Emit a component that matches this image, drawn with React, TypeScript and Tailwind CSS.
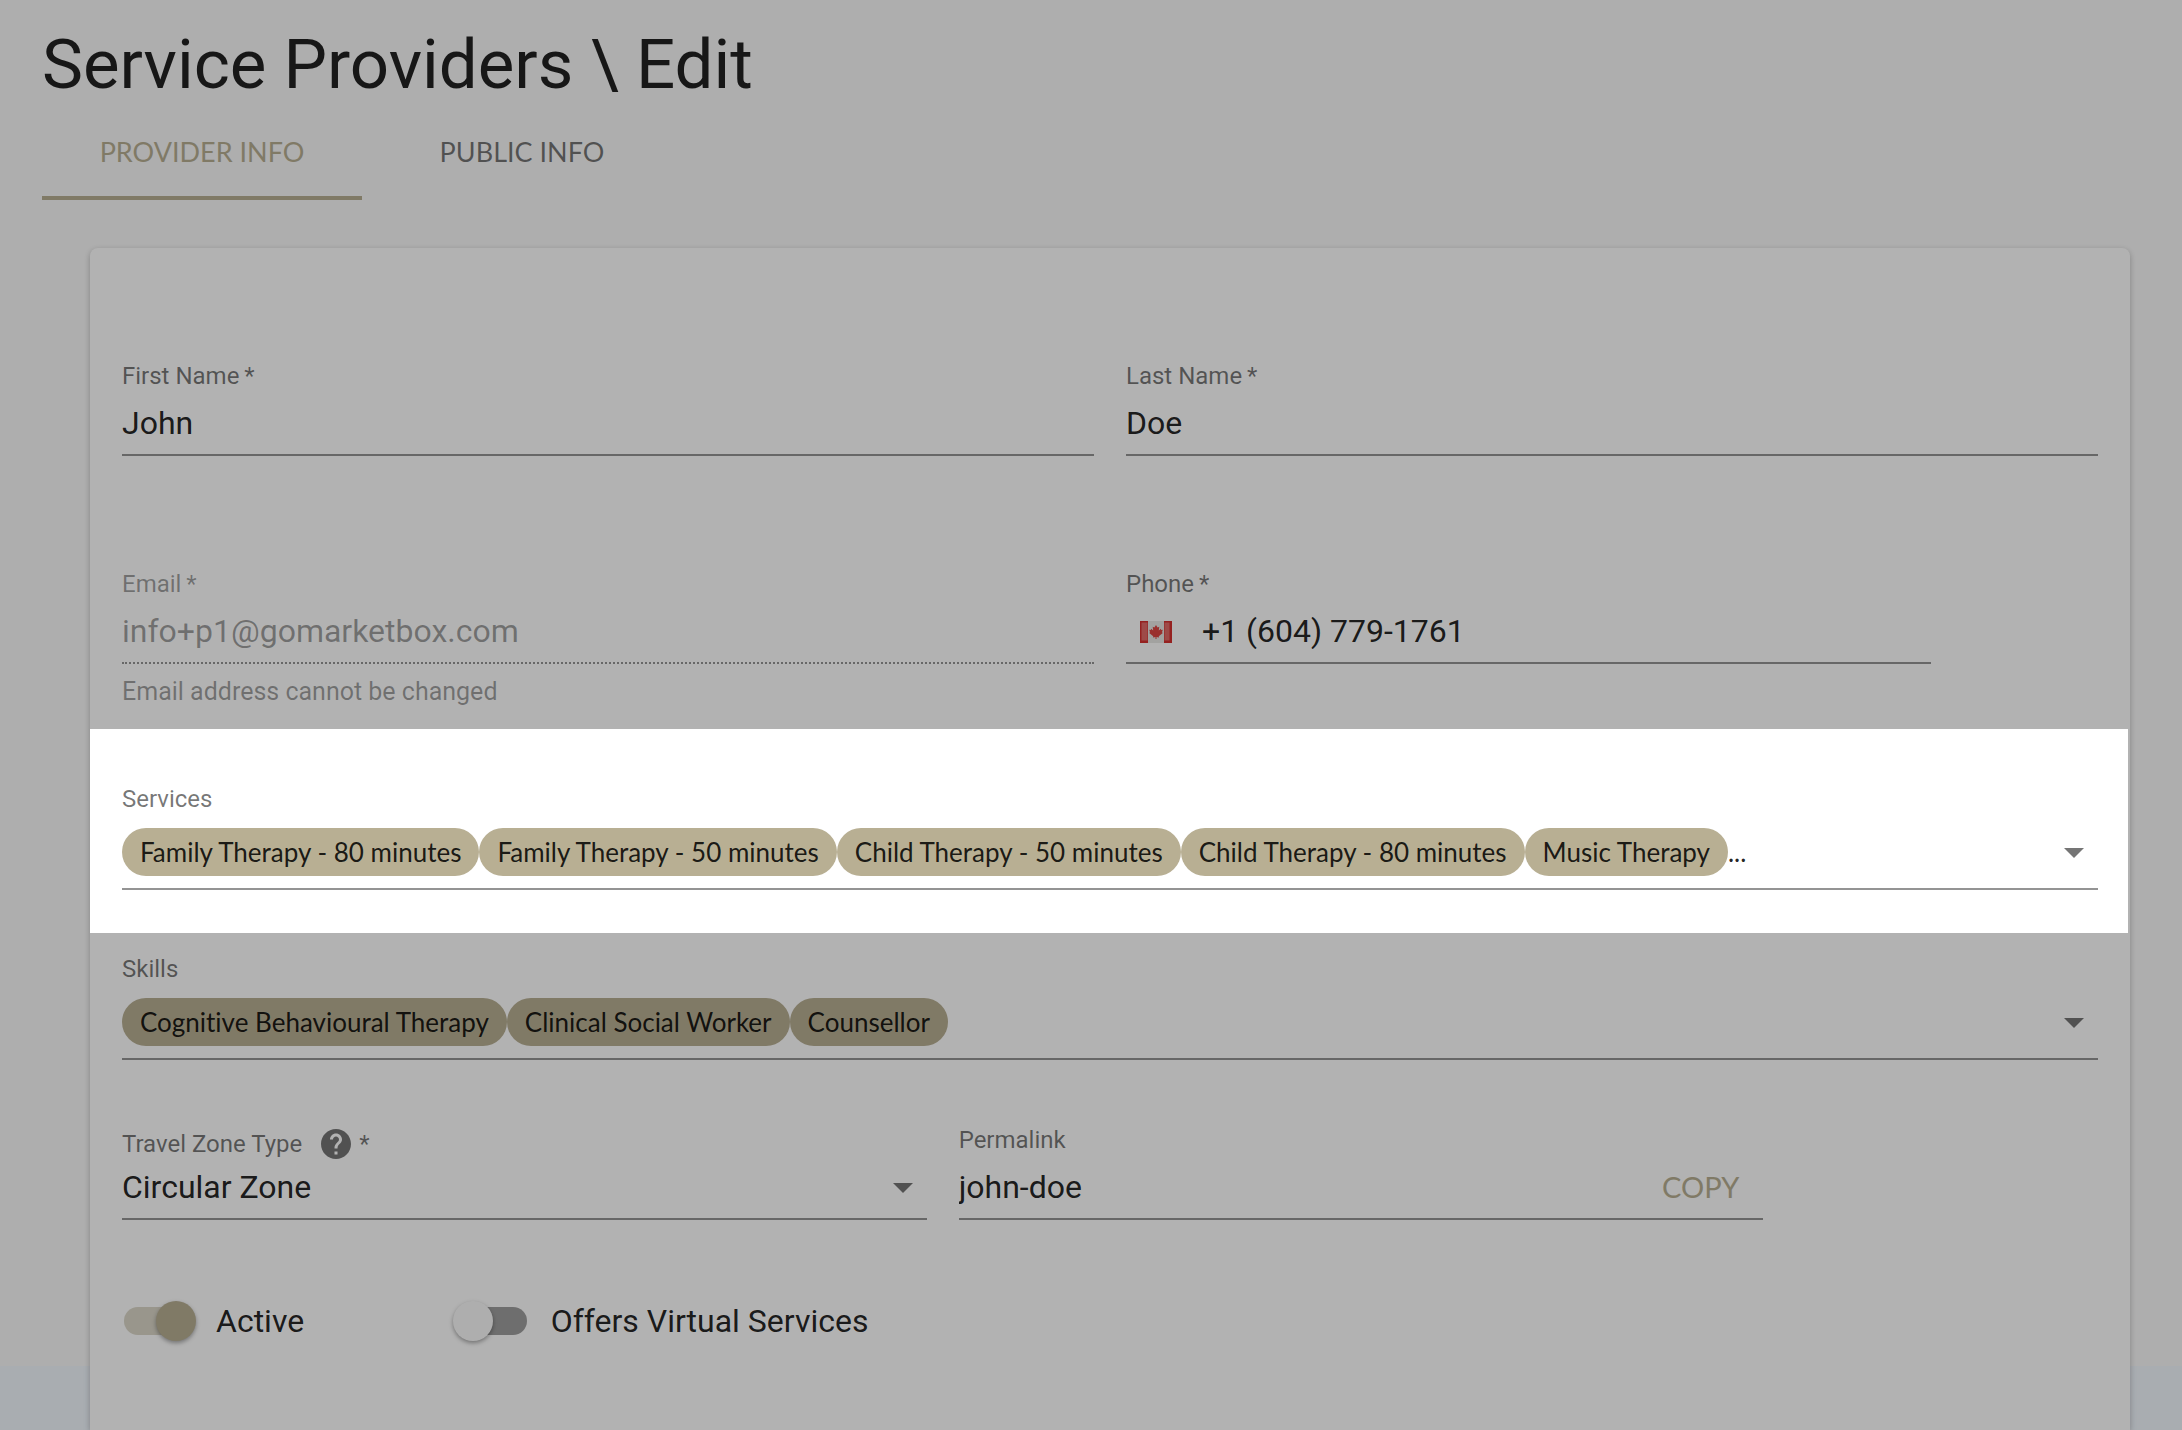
import React, { useState } from 'react';
import { MdArrowDropDown, MdHelp } from 'react-icons/md';

const SERVICES = [
  'Family Therapy - 80 minutes',
  'Family Therapy - 50 minutes',
  'Child Therapy - 50 minutes',
  'Child Therapy - 80 minutes',
  'Music Therapy',
];

const SKILLS = ['Cognitive Behavioural Therapy', 'Clinical Social Worker', 'Counsellor'];

const inputClass =
  'block w-full h-[52px] pb-3 border-b-2 border-black/42 bg-transparent text-[32px] text-black/87 outline-none disabled:border-dotted disabled:text-black/38';

function FieldLabel({ htmlFor, required, disabled, children }: any) {
  return (
    <label
      htmlFor={htmlFor}
      className={`flex h-11 items-center pb-3 text-2xl leading-6 ${disabled ? 'text-black/38' : 'text-black/54'}`}
    >
      {children}
      {required && <span className="whitespace-pre">{'\u2009*'}</span>}
    </label>
  );
}

function ChipSelect({ id, label, items, more }: { id: string; label: string; items: string[]; more?: boolean }) {
  return (
    <div>
      <span id={id} className="block pt-px pb-[17px] text-2xl leading-6 text-black/54">
        {label}
      </span>
      <button
        type="button"
        aria-haspopup="listbox"
        aria-labelledby={id}
        className="flex w-full items-center border-b-2 border-black/42 pb-3 text-left"
      >
        <span className="flex min-w-0 flex-1 items-center overflow-hidden font-[Lato,sans-serif] text-[26px] text-black/87 [font-variant-ligatures:none]">
          {items.map(item => (
            <span key={item} className="flex h-12 items-center whitespace-nowrap rounded-full bg-[#b8af93] px-[18px]">
              {item}
            </span>
          ))}
          {more && <span>...</span>}
        </span>
        <MdArrowDropDown className="size-12 shrink-0 text-black/54" />
      </button>
    </div>
  );
}

function Toggle({ label, checked, onChange }: { label: string; checked: boolean; onChange: (v: boolean) => void }) {
  return (
    <label className="ml-0.5 flex h-[74px] items-center gap-6 whitespace-nowrap text-[32px] text-black/87">
      <input
        type="checkbox"
        checked={checked}
        onChange={e => onChange(e.target.checked)}
        className="flex h-7 w-[68px] shrink-0 appearance-none items-center rounded-full bg-black/38 before:size-10 before:shrink-0 before:-translate-x-1.5 before:rounded-full before:bg-[#fafafa] before:shadow-[0_2px_4px_rgba(0,0,0,0.35)] before:content-[''] checked:bg-[#b8af93]/50 checked:before:translate-x-8 checked:before:bg-[#b8af93]"
      />
      {label}
    </label>
  );
}

function CanadaFlag() {
  return (
    <svg viewBox="0 0 32 24" className="h-6 w-8 shrink-0" aria-hidden="true">
      <g transform="translate(0 2)">
        <rect width="32" height="22" fill="#e8e8e6" />
        <rect width="8" height="22" fill="#d6302f" />
        <rect x="24" width="8" height="22" fill="#d6302f" />
        <path d="M1.5 1.5h6v18h-6zM24.500 1.500h5v18h-5z" fill="#e26a68" />
        <path
          d="M16 4l1.600 2.600 1.700-.8-.5 3.700 2-1.800.5 1.300 1.500-.2-.8 2.500.8.7-4 3.200.2 1.300-2.500-.4V18h-1v-1.900l-2.500.4.2-1.300-4-3.200.8-.7-.8-2.500 1.500.2.500-1.300 2 1.800-.5-3.700 1.700.8z"
          fill="#dd4542"
        />
      </g>
    </svg>
  );
}

export default function App() {
  const [tab, setTab] = useState('provider');
  const [active, setActive] = useState(true);
  const [virtual, setVirtual] = useState(false);

  const tabClass = (name: string) =>
    `h-24 w-80 border-b-4 pt-1 font-[Lato,sans-serif] text-[27px] uppercase ${
      tab === name ? 'border-[#b8af93] text-[#b8af93]' : 'border-transparent text-black/54'
    }`;

  return (
    <div className="flex min-h-screen flex-col overflow-hidden bg-[linear-gradient(to_top,#f2f8fe_64px,#fafafa_64px)] px-[42px] pt-[25px] font-[Roboto,sans-serif]">
      <h1 className="text-[69px] leading-[79px] text-black/87">Service Providers \ Edit</h1>

      <div role="tablist" className="flex">
        <button role="tab" aria-selected={tab === 'provider'} onClick={() => setTab('provider')} className={tabClass('provider')}>
          Provider Info
        </button>
        <button role="tab" aria-selected={tab === 'public'} onClick={() => setTab('public')} className={tabClass('public')}>
          Public Info
        </button>
      </div>

      <form className="mt-12 mr-2.5 ml-12 flex-1 rounded-t-lg bg-white pt-28 shadow-[0_2px_6px_rgba(0,0,0,0.25)]">
        <div className="grid grid-cols-12 gap-x-8 gap-y-28 px-8">
          <div className="col-span-6">
            <FieldLabel htmlFor="firstName" required>First Name</FieldLabel>
            <input id="firstName" defaultValue="John" className={inputClass} />
          </div>
          <div className="col-span-6">
            <FieldLabel htmlFor="lastName" required>Last Name</FieldLabel>
            <input id="lastName" defaultValue="Doe" className={inputClass} />
          </div>
          <div className="col-span-6">
            <FieldLabel htmlFor="email" required disabled>Email</FieldLabel>
            <input id="email" type="email" disabled defaultValue="info+p1@gomarketbox.com" className={inputClass} />
            <p className="mt-2 text-[25px] leading-10 text-black/38">Email address cannot be changed</p>
          </div>
          <div className="col-span-5">
            <FieldLabel htmlFor="phone" required>Phone</FieldLabel>
            <div className="flex h-[52px] items-center gap-[30px] border-b-2 border-black/42 pb-3 pl-3.5">
              <CanadaFlag />
              <input
                id="phone"
                type="tel"
                defaultValue="+1 (604) 779-1761"
                className="min-w-0 flex-1 bg-transparent text-[32px] leading-9 text-black/87 outline-none"
              />
            </div>
          </div>
        </div>

        {/* Highlighted step, everything around it is dimmed */}
        <section className="relative z-10 mt-[17px] mr-0.5 bg-white pt-[57px] pr-[30px] pb-[43px] pl-8 shadow-[0_0_0_4000px_rgba(0,0,0,0.3)]">
          <ChipSelect id="services" label="Services" items={SERVICES} more />
        </section>

        <div className="px-8 pt-[23px]">
          <ChipSelect id="skills" label="Skills" items={SKILLS} />
        </div>

        <div className="mt-16 grid grid-cols-12 gap-x-8 gap-y-16 px-8">
          <div className="col-span-5">
            <label htmlFor="zone" className="flex h-11 items-center pb-1 text-2xl text-black/54">
              Travel Zone Type
              <MdHelp className="ml-4 size-9" />
              <span className="whitespace-pre">{'\u2009*'}</span>
            </label>
            <div className="flex h-[52px] items-center border-b-2 border-black/42 pb-3">
              <select
                id="zone"
                className="min-w-0 flex-1 appearance-none bg-transparent text-[32px] leading-[38px] text-black/87 outline-none"
              >
                <option>Circular Zone</option>
              </select>
              <MdArrowDropDown className="pointer-events-none size-12 shrink-0 text-black/54" />
            </div>
          </div>
          <div className="col-span-5">
            <FieldLabel htmlFor="permalink">Permalink</FieldLabel>
            <div className="flex h-[52px] items-center border-b-2 border-black/42 pr-6 pb-3">
              <input
                id="permalink"
                defaultValue="john-doe"
                className="min-w-0 flex-1 bg-transparent text-[32px] leading-9 text-black/87 outline-none"
              />
              <button type="button" className="font-[Lato,sans-serif] text-[29px] leading-9 text-[#b8af93]">
                COPY
              </button>
            </div>
          </div>
          <div className="col-span-2 col-start-1">
            <Toggle label="Active" checked={active} onChange={setActive} />
          </div>
          <div className="col-span-4">
            <Toggle label="Offers Virtual Services" checked={virtual} onChange={setVirtual} />
          </div>
        </div>
      </form>
    </div>
  );
}
